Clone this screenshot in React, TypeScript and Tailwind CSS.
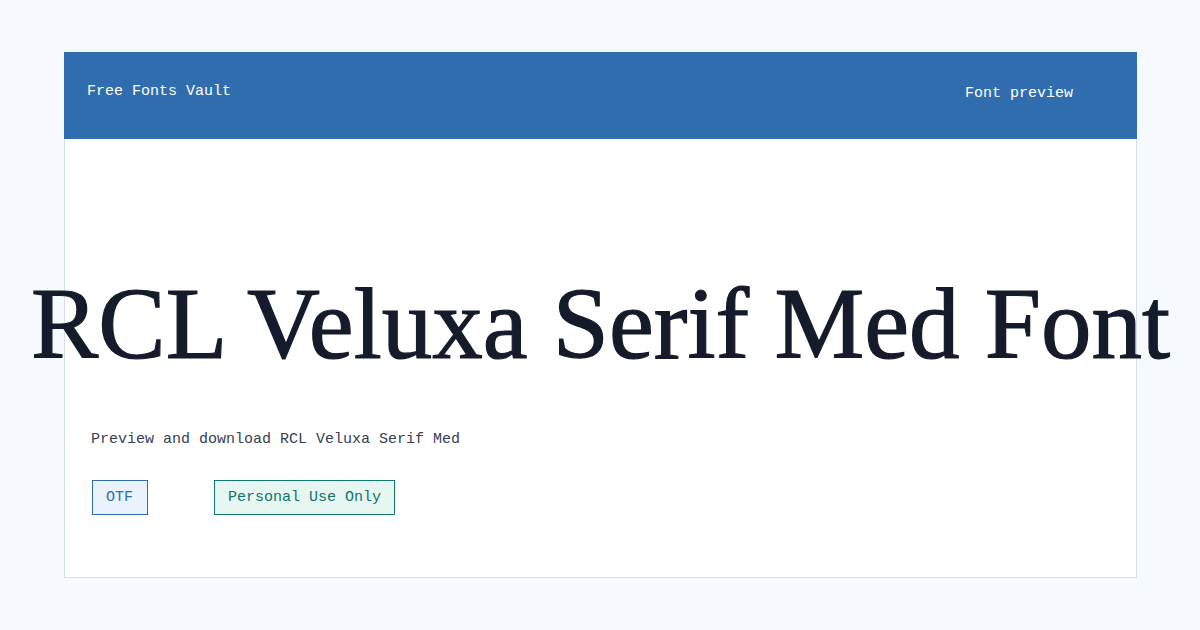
export default function App() {
  const mono = { fontFamily: '"Liberation Mono", monospace' };

  return (
    <div className="w-[1200px] h-[630px] bg-[#f6f9fd] pt-[52px] overflow-hidden">
      <div className="ml-[64px] w-[1073px] h-[526px] bg-white border border-[#d6e0eb] flex flex-col">
        {/* top bar */}
        <header
          className="h-[87px] -mx-px -mt-px bg-[#2f6dae] text-white flex items-start justify-between pl-[23px] pr-[64px] text-[15px] leading-[20px]"
          style={mono}
        >
          <span className="pt-[30px]">Free Fonts Vault</span>
          <span className="pt-[32px]">Font preview</span>
        </header>

        <div className="mt-[135px] flex justify-center">
          <h1
            className="whitespace-nowrap text-[101px] leading-none text-[#141b2b] [-webkit-text-stroke:1.2px_#141b2b]"
            style={{ fontFamily: '"Liberation Serif", serif' }}
          >
            RCL Veluxa Serif Med Font
          </h1>
        </div>

        <div className="px-[26px] mt-[55px]" style={mono}>
          <p className="text-[15px] leading-[20px] text-[#344154]">
            Preview and download RCL Veluxa Serif Med
          </p>
          <div className="mt-[30px] ml-px flex gap-[66px] text-[15px] leading-[20px]">
            <span className="h-[35px] pl-[13px] pr-[14px] flex items-center border border-[#2f6dae] bg-[#e9f2fd] text-[#2f6dae]">
              OTF
            </span>
            <span className="h-[35px] px-[13px] flex items-center border border-[#107a6b] bg-[#e6f6f1] text-[#0f7466]">
              Personal Use Only
            </span>
          </div>
        </div>
      </div>
    </div>
  );
}
